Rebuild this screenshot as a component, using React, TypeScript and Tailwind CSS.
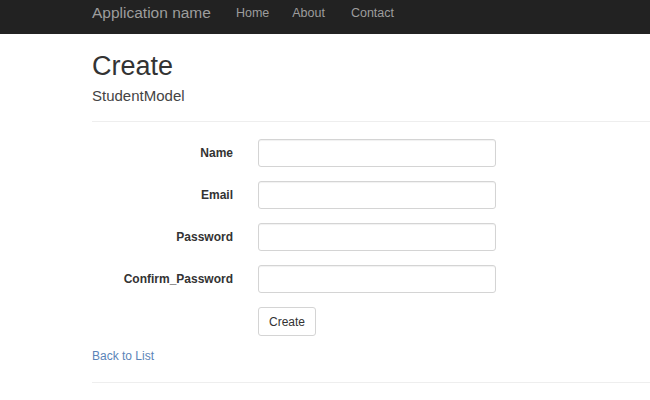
export default function App() {
  const fields = ["Name", "Email", "Password", "Confirm_Password"];

  return (
    <div className="min-h-[400px] bg-white font-['Liberation_Sans',Arial,sans-serif] text-[#333]">
      <nav className="flex h-[34px] items-center bg-[#222] pl-[92px]">
        <span className="-mt-[8px] text-[15.5px] text-[#9d9d9d]">Application name</span>
        <div className="-mt-[8px] ml-[25px] flex gap-[23px] text-[12.5px] text-[#9d9d9d]">
          <span>Home</span>
          <span>About</span>
          <span className="ml-[3px]">Contact</span>
        </div>
      </nav>

      <main className="pl-[92px]">
        <h2 className="mt-[14px] text-[27px] leading-[36px] text-[#333]">Create</h2>
        <h4 className="mt-[2px] text-[15px] leading-[20px] text-[#444]">StudentModel</h4>
        <hr className="mt-[15px] border-t border-[#eee]" />

        <form className="mt-[17px] flex flex-col gap-[14px]">
          {fields.map((f) => (
            <div key={f} className="flex items-center">
              <label className="w-[141px] text-right text-[12px] font-bold text-[#333]">
                {f}
              </label>
              <input
                type="text"
                className="ml-[25px] h-[28px] w-[238px] rounded-[3px] border border-[#d4d4d4] bg-white shadow-[inset_0_1px_1px_rgba(0,0,0,0.06)]"
              />
            </div>
          ))}
          <div className="pl-[166px]">
            <button
              type="button"
              className="h-[29px] w-[58px] rounded-[3px] border border-[#d4d4d4] bg-white text-[12px] text-[#333]"
            >
              Create
            </button>
          </div>
        </form>

        <a className="mt-[11px] block text-[12px] text-[#5b84b8]">Back to List</a>
        <hr className="mt-[17px] border-t border-[#eee]" />
      </main>
    </div>
  );
}
